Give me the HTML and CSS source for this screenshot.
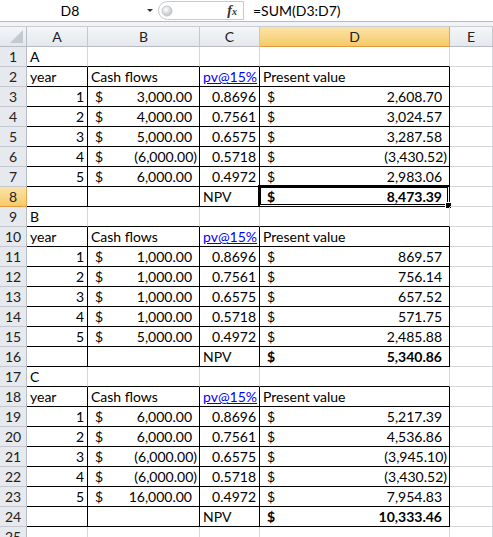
FILE: index.html
```html
<!DOCTYPE html>
<html>
<head>
<meta charset="utf-8">
<link rel="stylesheet" href="styles.css">
</head>
<body>
<div class="fbar">
  <div class="namebox"><span class="nm">D8</span><span class="dd"></span></div>
  <div class="fxbox">
    <svg class="knob" width="20" height="20" viewBox="0 0 20 20"><defs><radialGradient id="g" cx="0.4" cy="0.35" r="0.7"><stop offset="0" stop-color="#ffffff"/><stop offset="1" stop-color="#b9bcc1"/></radialGradient></defs><circle cx="8" cy="10" r="5" fill="url(#g)" stroke="#c4c7cc"/></svg>
    <span class="fx">f<span class="fxx">x</span></span>
  </div>
  <div class="formula">=SUM(D3:D7)</div>
</div>
<div class="strip"></div>
<div class="sheet">
  <div class="corner"><span class="tri"></span></div>
  <div class="ch">A</div><div class="ch">B</div><div class="ch">C</div><div class="ch sel">D</div><div class="ch">E</div>

  <div class="rh">1</div><div class="c bb">A</div><div class="c bb"></div><div class="c bb"></div><div class="c bb"></div><div class="c"></div>
  <div class="rh">2</div><div class="c t">year</div><div class="c t">Cash flows</div><div class="c t"><span class="link">pv@15%</span></div><div class="c t">Present value</div><div class="c"></div>
  <div class="rh">3</div><div class="c t n">1</div><div class="c t acc"><span>$</span><span class="p">3,000.00</span></div><div class="c t n">0.8696</div><div class="c t acc"><span>$</span><span class="p">2,608.70</span></div><div class="c"></div>
  <div class="rh">4</div><div class="c t n">2</div><div class="c t acc"><span>$</span><span class="p">4,000.00</span></div><div class="c t n">0.7561</div><div class="c t acc"><span>$</span><span class="p">3,024.57</span></div><div class="c"></div>
  <div class="rh">5</div><div class="c t n">3</div><div class="c t acc"><span>$</span><span class="p">5,000.00</span></div><div class="c t n">0.6575</div><div class="c t acc"><span>$</span><span class="p">3,287.58</span></div><div class="c"></div>
  <div class="rh">6</div><div class="c t n">4</div><div class="c t acc"><span>$</span><span>(6,000.00)</span></div><div class="c t n">0.5718</div><div class="c t acc"><span>$</span><span>(3,430.52)</span></div><div class="c"></div>
  <div class="rh">7</div><div class="c t n">5</div><div class="c t acc"><span>$</span><span class="p">6,000.00</span></div><div class="c t n">0.4972</div><div class="c t acc"><span>$</span><span class="p">2,983.06</span></div><div class="c"></div>
  <div class="rh sel">8</div><div class="c t"></div><div class="c t"></div><div class="c t">NPV</div><div class="c t acc b active"><span>$</span><span class="p">8,473.39</span><span class="selbox"></span><span class="handle"></span></div><div class="c"></div>

  <div class="rh">9</div><div class="c bb">B</div><div class="c bb"></div><div class="c bb"></div><div class="c bb"></div><div class="c"></div>
  <div class="rh">10</div><div class="c t">year</div><div class="c t">Cash flows</div><div class="c t"><span class="link">pv@15%</span></div><div class="c t">Present value</div><div class="c"></div>
  <div class="rh">11</div><div class="c t n">1</div><div class="c t acc"><span>$</span><span class="p">1,000.00</span></div><div class="c t n">0.8696</div><div class="c t acc"><span>$</span><span class="p">869.57</span></div><div class="c"></div>
  <div class="rh">12</div><div class="c t n">2</div><div class="c t acc"><span>$</span><span class="p">1,000.00</span></div><div class="c t n">0.7561</div><div class="c t acc"><span>$</span><span class="p">756.14</span></div><div class="c"></div>
  <div class="rh">13</div><div class="c t n">3</div><div class="c t acc"><span>$</span><span class="p">1,000.00</span></div><div class="c t n">0.6575</div><div class="c t acc"><span>$</span><span class="p">657.52</span></div><div class="c"></div>
  <div class="rh">14</div><div class="c t n">4</div><div class="c t acc"><span>$</span><span class="p">1,000.00</span></div><div class="c t n">0.5718</div><div class="c t acc"><span>$</span><span class="p">571.75</span></div><div class="c"></div>
  <div class="rh">15</div><div class="c t n">5</div><div class="c t acc"><span>$</span><span class="p">5,000.00</span></div><div class="c t n">0.4972</div><div class="c t acc"><span>$</span><span class="p">2,485.88</span></div><div class="c"></div>
  <div class="rh">16</div><div class="c t"></div><div class="c t"></div><div class="c t">NPV</div><div class="c t acc b"><span>$</span><span class="p">5,340.86</span></div><div class="c"></div>

  <div class="rh">17</div><div class="c bb">C</div><div class="c bb"></div><div class="c bb"></div><div class="c bb"></div><div class="c"></div>
  <div class="rh">18</div><div class="c t">year</div><div class="c t">Cash flows</div><div class="c t"><span class="link">pv@15%</span></div><div class="c t">Present value</div><div class="c"></div>
  <div class="rh">19</div><div class="c t n">1</div><div class="c t acc"><span>$</span><span class="p">6,000.00</span></div><div class="c t n">0.8696</div><div class="c t acc"><span>$</span><span class="p">5,217.39</span></div><div class="c"></div>
  <div class="rh">20</div><div class="c t n">2</div><div class="c t acc"><span>$</span><span class="p">6,000.00</span></div><div class="c t n">0.7561</div><div class="c t acc"><span>$</span><span class="p">4,536.86</span></div><div class="c"></div>
  <div class="rh">21</div><div class="c t n">3</div><div class="c t acc"><span>$</span><span>(6,000.00)</span></div><div class="c t n">0.6575</div><div class="c t acc"><span>$</span><span>(3,945.10)</span></div><div class="c"></div>
  <div class="rh">22</div><div class="c t n">4</div><div class="c t acc"><span>$</span><span>(6,000.00)</span></div><div class="c t n">0.5718</div><div class="c t acc"><span>$</span><span>(3,430.52)</span></div><div class="c"></div>
  <div class="rh">23</div><div class="c t n">5</div><div class="c t acc"><span>$</span><span class="p">16,000.00</span></div><div class="c t n">0.4972</div><div class="c t acc"><span>$</span><span class="p">7,954.83</span></div><div class="c"></div>
  <div class="rh">24</div><div class="c t"></div><div class="c t"></div><div class="c t">NPV</div><div class="c t acc b"><span>$</span><span class="p">10,333.46</span></div><div class="c"></div>
  <div class="rh">25</div><div class="c"></div><div class="c"></div><div class="c"></div><div class="c"></div><div class="c"></div>
</div>
</body>
</html>
```
FILE: styles.css
```css
html, body {
  margin: 0;
  padding: 0;
  width: 493px;
  height: 537px;
  overflow: hidden;
  background: #fff;
}
body {
  font-family: Lato, "Liberation Sans", sans-serif;
  font-size: 14px;
  color: #000;
}
.fbar {
  display: flex;
  height: 22px;
  border-bottom: 1px solid #b6bac0;
  box-sizing: border-box;
  background: #fff;
}
.namebox {
  width: 158px;
  position: relative;
  display: flex;
  align-items: center;
  justify-content: center;
}
.nm {
  font-size: 14px;
  margin-right: 18px;
}
.dd {
  position: absolute;
  right: 5px;
  top: 9px;
  width: 0;
  height: 0;
  border-left: 3px solid transparent;
  border-right: 3px solid transparent;
  border-top: 3px solid #333;
}
.fxbox {
  width: 86px;
  margin: 1px 0 0 0;
  height: 19px;
  box-sizing: border-box;
  border: 1px solid #c6c9ce;
  border-left: none;
  border-radius: 10px 0 0 10px;
  border-left: 1px solid #c6c9ce;
  display: flex;
  align-items: center;
  justify-content: space-between;
  position: relative;
}
.knob {
  margin-left: 0;
}
.fx {
  font-family: "Liberation Serif", serif;
  font-style: italic;
  font-weight: bold;
  font-size: 14px;
  color: #333;
  margin-right: 6px;
}
.fxx {
  font-size: 10px;
}
.formula {
  flex: 1;
  padding-left: 9px;
  display: flex;
  align-items: center;
  font-size: 14px;
}
.strip {
  height: 5px;
  background: #f1f3f6;
  border-bottom: 1px solid #c9ccd1;
  box-sizing: border-box;
}
.sheet {
  display: grid;
  grid-template-columns: 27px 61px 112px 60px 190px 43px;
  grid-template-rows: 20px;
  grid-auto-rows: 20px;
}
.sheet > div {
  box-sizing: border-box;
  border-right: 1px solid #d4d6d9;
  border-bottom: 1px solid #d4d6d9;
  white-space: nowrap;
  overflow: visible;
}
.sheet > .corner {
  background: linear-gradient(#f3f5f8, #e3e7ec);
  border-right: 1px solid #b8bdc4;
  border-bottom: 1px solid #b8bdc4;
  position: relative;
}
.tri {
  position: absolute;
  right: 3px;
  bottom: 3px;
  width: 0;
  height: 0;
  border-left: 13px solid transparent;
  border-bottom: 13px solid #c4c9d0;
}
.sheet > .ch {
  background: linear-gradient(#f4f6f8, #e4e8ed);
  border-right: 1px solid #c5c9cf;
  border-bottom: 1px solid #b8bdc4;
  display: flex;
  align-items: center;
  justify-content: center;
  color: #222;
  font-size: 14px;
}
.sheet > .rh {
  background: #e6e9ee;
  border-right: 1px solid #b8bdc4;
  border-bottom: 1px solid #c5c9cf;
  display: flex;
  align-items: center;
  justify-content: center;
  color: #222;
  font-size: 14px;
}
.sheet > .sel {
  background: linear-gradient(#fbe3a8, #f5cb6a);
  border-right-color: #e6a64c;
  border-bottom-color: #e49a3a;
}
.sheet > .c {
  display: flex;
  align-items: center;
  padding: 0 2px 0 3px;
  position: relative;
}
.sheet > .bb {
  border-bottom-color: #000;
}
.sheet > .t {
  border-right-color: #000;
  border-bottom-color: #000;
}
.sheet > .n {
  justify-content: flex-end;
  padding-right: 3px;
}
.sheet > .acc {
  justify-content: space-between;
  padding-left: 7px;
  padding-right: 2px;
}
.p {
  margin-right: 5px;
}
.b {
  font-weight: bold;
}
.link {
  color: #0000ff;
  text-decoration: underline;
}
.selbox {
  position: absolute;
  left: -2px;
  top: -2px;
  right: -1px;
  bottom: -1px;
  border: 3px double #000;
  box-sizing: border-box;
}
.handle {
  position: absolute;
  right: -3px;
  bottom: -3px;
  width: 5px;
  height: 5px;
  background: #000;
  border: 1px solid #fff;
  box-sizing: border-box;
  width: 7px;
  height: 7px;
}
```
